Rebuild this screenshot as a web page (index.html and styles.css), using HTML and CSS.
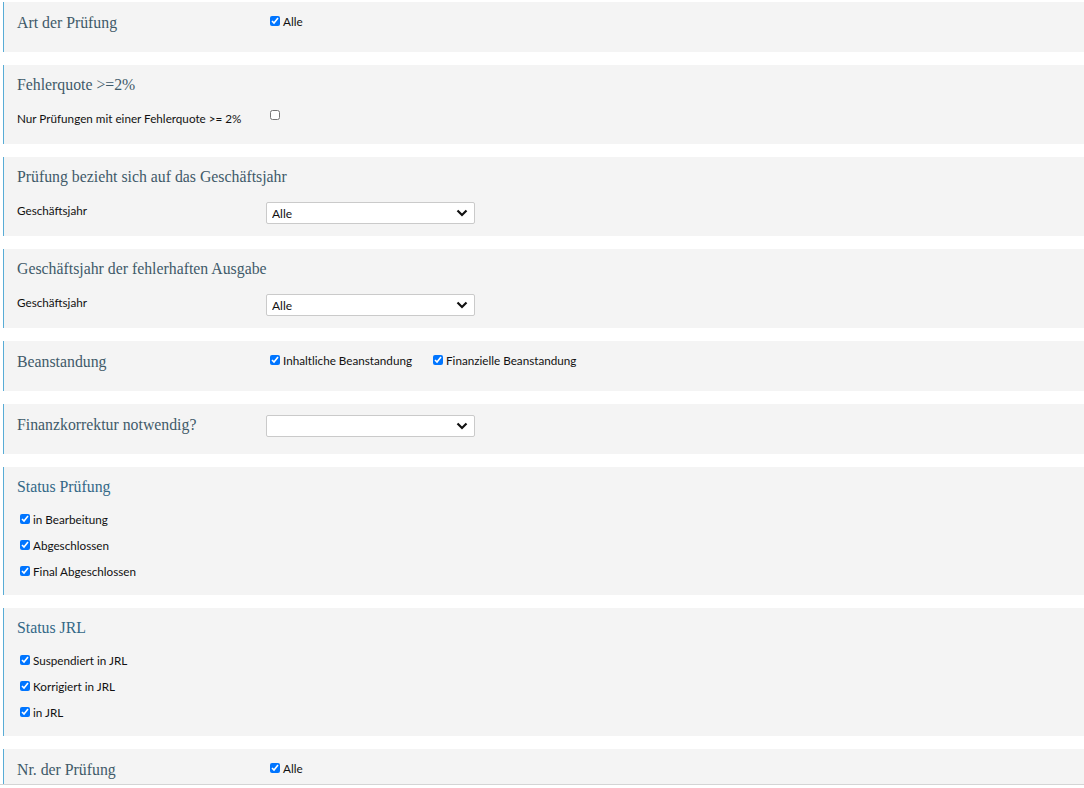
FILE: index.html
```html
<!doctype html>
<html lang="de">
  <head>
    <meta charset="UTF-8" />
    <meta name="viewport" content="width=device-width, initial-scale=1.0" />
    <title>Prüfungen filtern</title>
    <link rel="stylesheet" href="styles.css">
  </head>
  <body>
    <div class="page">
      <section class="panel inline">
        <h4 class="panel-title">Art der Prüfung</h4>
        <div class="controls">
          <label class="check"><input type="checkbox" checked />Alle</label>
        </div>
      </section>

      <section class="panel">
        <h4 class="panel-title">Fehlerquote &gt;=2%</h4>
        <div class="row">
          <span class="row-label">Nur Prüfungen mit einer Fehlerquote &gt;= 2%</span>
          <div class="controls">
            <label class="check"><input type="checkbox" /></label>
          </div>
        </div>
      </section>

      <section class="panel">
        <h4 class="panel-title">Prüfung bezieht sich auf das Geschäftsjahr</h4>
        <div class="row">
          <span class="row-label">Geschäftsjahr</span>
          <div class="controls">
            <div class="select-box">
              <select><option>Alle</option></select>
              <svg class="chevron" viewBox="0 0 12 8"><path d="M1.5 1.5 6 6l4.5-4.5" /></svg>
            </div>
          </div>
        </div>
      </section>

      <section class="panel">
        <h4 class="panel-title">Geschäftsjahr der fehlerhaften Ausgabe</h4>
        <div class="row">
          <span class="row-label">Geschäftsjahr</span>
          <div class="controls">
            <div class="select-box">
              <select><option>Alle</option></select>
              <svg class="chevron" viewBox="0 0 12 8"><path d="M1.5 1.5 6 6l4.5-4.5" /></svg>
            </div>
          </div>
        </div>
      </section>

      <section class="panel inline">
        <h4 class="panel-title">Beanstandung</h4>
        <div class="controls">
          <label class="check"><input type="checkbox" checked />Inhaltliche Beanstandung</label>
          <label class="check"><input type="checkbox" checked />Finanzielle Beanstandung</label>
        </div>
      </section>

      <section class="panel inline">
        <h4 class="panel-title">Finanzkorrektur notwendig?</h4>
        <div class="controls">
          <div class="select-box">
            <select><option></option></select>
            <svg class="chevron" viewBox="0 0 12 8"><path d="M1.5 1.5 6 6l4.5-4.5" /></svg>
          </div>
        </div>
      </section>

      <section class="panel">
        <h4 class="panel-title status">Status Prüfung</h4>
        <ul class="check-list">
          <li><label class="check"><input type="checkbox" checked />in Bearbeitung</label></li>
          <li><label class="check"><input type="checkbox" checked />Abgeschlossen</label></li>
          <li><label class="check"><input type="checkbox" checked />Final Abgeschlossen</label></li>
        </ul>
      </section>

      <section class="panel">
        <h4 class="panel-title status">Status JRL</h4>
        <ul class="check-list">
          <li><label class="check"><input type="checkbox" checked />Suspendiert in JRL</label></li>
          <li><label class="check"><input type="checkbox" checked />Korrigiert in JRL</label></li>
          <li><label class="check"><input type="checkbox" checked />in JRL</label></li>
        </ul>
      </section>

      <section class="panel inline">
        <h4 class="panel-title">Nr. der Prüfung</h4>
        <div class="controls">
          <label class="check"><input type="checkbox" checked />Alle</label>
        </div>
      </section>
    </div>
  </body>
</html>
```

FILE: styles.css
```css
/* Page */
body {
  margin: 0;
  font-family: Lato, "Liberation Sans", Arial, sans-serif;
  font-size: 11.7px;
  color: #111;
  background-color: #fff;
}

.page {
  height: 782px;
  padding: 2px 0 0 3px;
  border-bottom: 1px solid #d4d4d4;
  overflow: hidden;
}

/* Filter panels */
.panel {
  background-color: #f4f4f4;
  border-left: 1px solid #58acd6;
  padding: 10px 13px 12px;
  margin-bottom: 13px;
}

.panel.inline {
  display: flex;
  align-items: flex-start;
  padding-bottom: 19px;
}

.panel-title {
  margin: 0;
  font-family: "Liberation Serif", "Times New Roman", serif;
  font-size: 15.8px;
  font-weight: normal;
  line-height: 20px;
  color: #3f5a69;
}

.panel.inline .panel-title {
  width: 249px;
  flex-shrink: 0;
  margin-top: 1px;
}

.panel-title.status {
  color: #336887;
}

.row {
  display: flex;
  align-items: flex-start;
  margin-top: 15px;
  min-height: 22px;
}

.row-label {
  width: 249px;
  flex-shrink: 0;
  line-height: 16px;
}

.controls {
  display: flex;
  align-items: center;
}

.panel.inline .controls {
  height: 20px;
  align-items: flex-start;
  margin-top: 1px;
}

/* Checkboxes */
.check {
  display: flex;
  align-items: center;
  line-height: 16px;
  margin-right: 17px;
}

.check input {
  width: 10px;
  height: 10px;
  margin: 0 3px 0 4px;
}

.check-list {
  list-style: none;
  margin: 14px 0 0;
  padding: 0;
}

.check-list li {
  margin-bottom: 10px;
}

.check-list li:last-child {
  margin-bottom: 0;
}

.check-list .check input {
  margin-left: 3px;
}

.panel:has(.check-list) {
  padding-bottom: 16px;
}

/* Selects */
.select-box {
  position: relative;
  width: 209px;
  height: 22px;
  flex-shrink: 0;
}

.select-box select {
  appearance: none;
  width: 100%;
  height: 100%;
  margin: 0;
  padding: 0 24px 0 5px;
  border: 1px solid #cacaca;
  border-radius: 2px;
  background-color: #fff;
  font-family: inherit;
  font-size: 12px;
  color: #111;
}

.chevron {
  position: absolute;
  right: 7px;
  top: 7px;
  width: 12px;
  height: 8px;
  fill: none;
  stroke: #111;
  stroke-width: 2.2;
  pointer-events: none;
}
```
